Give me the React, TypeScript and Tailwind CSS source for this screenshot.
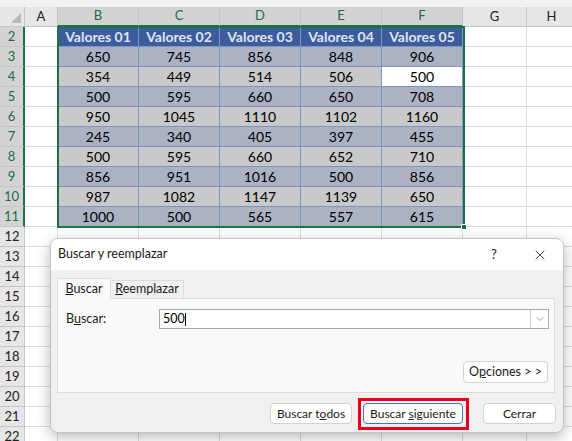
import { X, ChevronDown } from "lucide-react";

const cols = [
  { l: "A", w: 33 },
  { l: "B", w: 81 },
  { l: "C", w: 81 },
  { l: "D", w: 81 },
  { l: "E", w: 81 },
  { l: "F", w: 81 },
  { l: "G", w: 64 },
  { l: "H", w: 50 },
];

const data = [
  [650, 745, 856, 848, 906],
  [354, 449, 514, 506, 500],
  [500, 595, 660, 650, 708],
  [950, 1045, 1110, 1102, 1160],
  [245, 340, 405, 397, 455],
  [500, 595, 660, 652, 710],
  [856, 951, 1016, 500, 856],
  [987, 1082, 1147, 1139, 650],
  [1000, 500, 565, 557, 615],
];

const rows = Array.from({ length: 21 }, (_, i) => i + 2);

function Cell({ row, ci, w }: { row: number; ci: number; w: number }) {
  const inTable = ci >= 1 && ci <= 5 && row >= 2 && row <= 11;
  if (!inTable) {
    return (
      <div
        style={{ width: w }}
        className="h-full shrink-0 border-r border-b border-[#dadada] bg-white"
      />
    );
  }
  if (row === 2) {
    return (
      <div
        style={{ width: w }}
        className="h-full shrink-0 flex items-center justify-center border-r border-b border-[#7d93c2] bg-[#3d5c9e] text-[#dfe4ee] font-bold text-[14px]"
      >
        Valores 0{ci}
      </div>
    );
  }
  const active = row === 4 && ci === 5;
  const odd = row % 2 === 1;
  return (
    <div
      style={{ width: w }}
      className={
        "h-full shrink-0 flex items-center justify-center border-r border-b border-[#7d93c2] text-[14px] text-black " +
        (active ? "bg-white" : odd ? "bg-[#aab2c4]" : "bg-[#c9c9c9]")
      }
    >
      {data[row - 3][ci - 1]}
    </div>
  );
}

function Btn({
  children,
  w,
  primary,
}: {
  children: React.ReactNode;
  w: string;
  primary?: boolean;
}) {
  return (
    <div
      className={
        "h-[21px] flex items-center justify-center rounded-[4px] bg-white text-[12px] text-[#1a1a1a] " +
        w +
        (primary ? " border border-[#3a78c6]" : " border border-[#d3d3d3]")
      }
    >
      <span>{children}</span>
    </div>
  );
}

export default function App() {
  return (
    <div
      className="relative w-[572px] h-[441px] overflow-hidden bg-white"
      style={{ fontFamily: "Lato, 'Open Sans', sans-serif" }}
    >
      {/* strip above column headers */}
      <div className="h-[7px] bg-[#f3f3f3]" />
      {/* column headers */}
      <div className="flex h-[20px]">
        <div className="w-[25px] shrink-0 relative bg-[#e6e6e6] border-r border-b border-[#c6c6c6]">
          <svg className="absolute right-[3px] bottom-[3px]" width="10" height="10" viewBox="0 0 10 10">
            <polygon points="10,0 10,10 0,10" fill="#b8b8b8" />
          </svg>
        </div>
        {cols.map((c, i) => {
          const sel = i >= 1 && i <= 5;
          return (
            <div
              key={c.l}
              style={{ width: c.w }}
              className={
                "shrink-0 flex items-center justify-center text-[13px] border-r border-[#c6c6c6] " +
                (sel
                  ? "bg-[#d3d3d3] text-[#1e6b45] border-b-2 border-b-[#1e7145]"
                  : "bg-[#e6e6e6] text-[#222] border-b border-b-[#c6c6c6]")
              }
            >
              {c.l}
            </div>
          );
        })}
      </div>
      {rows.map((r) => {
        const sel = r <= 11;
        return (
          <div key={r} className="flex h-[20px]">
            <div
              className={
                "w-[25px] shrink-0 flex items-center justify-center text-[13px] border-b border-[#c6c6c6] " +
                (sel
                  ? "bg-[#d3d3d3] text-[#1e6b45] border-r-2 border-r-[#1e7145]"
                  : "bg-[#e6e6e6] text-[#222] border-r border-r-[#c6c6c6]")
              }
            >
              {r}
            </div>
            {cols.map((c, ci) => (
              <Cell key={c.l} row={r} ci={ci} w={c.w} />
            ))}
          </div>
        );
      })}

      {/* selection outline */}
      <div className="absolute left-[57px] top-[26px] w-[408px] h-[202px] border-2 border-[#1e7145] pointer-events-none" />
      <div className="absolute left-[461px] top-[224px] w-[6px] h-[6px] bg-[#1e7145] border border-white" />

      {/* dialog */}
      <div
        className="absolute left-[50px] top-[238px] w-[514px] h-[195px] rounded-[8px] border border-[#c4c4c4] bg-[#f0f0f0] shadow-[0_4px_14px_rgba(0,0,0,0.28)] overflow-hidden flex flex-col"
        style={{ fontFamily: "Lato, 'Noto Sans', sans-serif" }}
      >
        <div className="h-[31px] shrink-0 bg-white flex items-center pl-[7px] text-[12.5px] text-[#1a1a1a]">
          <span className="flex-1">Buscar y reemplazar</span>
          <span className="w-[46px] text-center text-[13px] ml-[4px]">?</span>
          <span className="w-[46px] flex justify-center">
            <X size={16} strokeWidth={1.2} className="text-[#222]" />
          </span>
        </div>
        <div className="flex-1 px-[6px] pt-[8px] flex flex-col">
          <div className="flex items-end h-[20px] text-[12.5px] text-[#1a1a1a]">
            <div className="w-[54px] h-[21px] -mb-px relative z-10 bg-[#f9f9f9] border border-b-0 border-[#dcdcdc] flex items-center justify-center">
              <span>
                <u>B</u>uscar
              </span>
            </div>
            <div className="w-[73px] h-[18px] bg-[#f0f0f0] border border-l-0 border-[#dcdcdc] border-b-0 flex items-center justify-center">
              <span>
                <u>R</u>eemplazar
              </span>
            </div>
          </div>
          <div className="w-[498px] h-[95px] bg-[#f9f9f9] border border-[#dcdcdc] flex flex-col">
            <div className="flex items-center mt-[10px] pl-[8px] pr-[5px]">
              <span className="w-[93px] text-[12.5px] text-[#1a1a1a]">
                B<u>u</u>scar:
              </span>
              <div className="flex-1 h-[20px] bg-white border border-[#a9a9a9] flex items-center">
                <span className="pl-[3px] text-[12.5px] text-black leading-none">500</span>
                <span className="w-px h-[13px] bg-black" />
                <div className="ml-auto w-[18px] h-full border-l border-[#c8c8c8] flex items-center justify-center">
                  <ChevronDown size={12} strokeWidth={1.2} className="text-[#555]" />
                </div>
              </div>
            </div>
            <div className="flex justify-end mt-[32px] pr-[6px]">
              <div className="w-[85px] h-[22px] flex items-center justify-center rounded-[4px] bg-white border border-[#d3d3d3] text-[12.5px] text-[#1a1a1a]">
                <span>
                  O<u>p</u>ciones &gt; &gt;
                </span>
              </div>
            </div>
          </div>
          <div className="flex items-center justify-end mt-[10px] pr-[1px]">
            <Btn w="w-[82px]">
              Buscar t<u>o</u>dos
            </Btn>
            <div className="relative ml-[11px]">
              <Btn w="w-[100px]" primary>
                Buscar <u>s</u>iguiente
              </Btn>
              <div className="absolute -left-[5px] -top-[5px] -right-[6px] -bottom-[6px] border-[3px] border-[#e8001c]" />
            </div>
            <div className="ml-[20px]">
              <Btn w="w-[73px]">Cerrar</Btn>
            </div>
          </div>
        </div>
      </div>
    </div>
  );
}
